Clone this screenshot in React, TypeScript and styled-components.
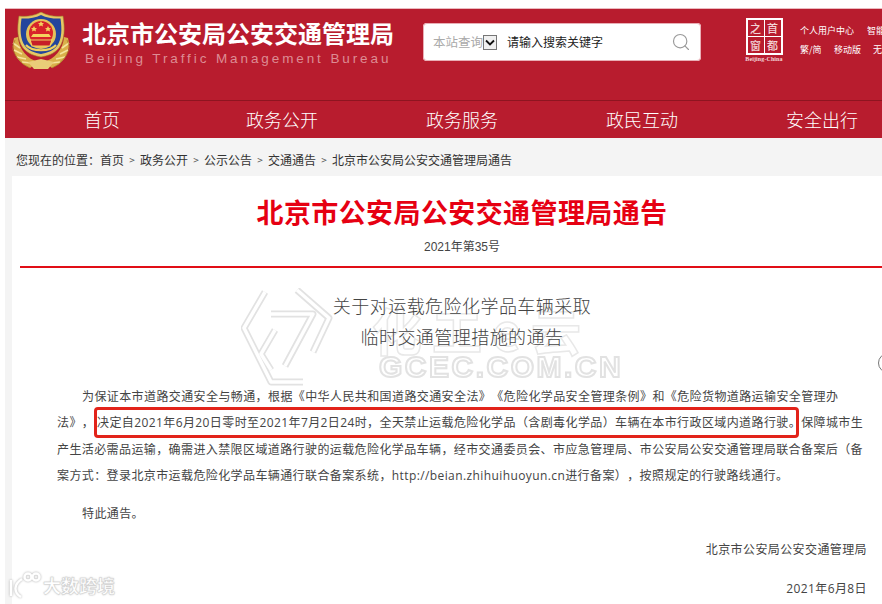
import React from "react";
import styled, { createGlobalStyle } from "styled-components";
import { Search } from "lucide-react";

const Global = createGlobalStyle`
  html, body { margin: 0; padding: 0; width: 882px; height: 604px; overflow: hidden; background: #fff; }
  body { font-family: "Liberation Sans", "Noto Sans CJK SC", sans-serif; text-spacing-trim: space-all; }
  #root { height: 604px; overflow: hidden; }
`;

const Page = styled.div`
  position: relative;
  height: 604px;
  box-sizing: border-box;
  padding: 8px 0 0 5px;
`;
const Shell = styled.div`
  position: relative;
  width: 877px;
  height: 596px;
  overflow: hidden;
  background: #f4f4f4;
`;
const RedBand = styled.header`
  background: #b81c2e;
  border-top: 1px solid #eab9bf;
`;
const TopRow = styled.div`
  display: flex;
  align-items: flex-start;
  height: 92px;
  border-bottom: 1px solid #8e1420;
  box-sizing: border-box;
  padding-left: 7px;
`;
const Emblem = styled.svg`
  width: 58px; height: 58px; margin-top: 3px; flex: none;
`;
const Brand = styled.div`
  margin-left: 12px; margin-top: 8px; width: 341px; flex: none;
`;
const BrandName = styled.div`
  font: bold 24px/32px "Noto Sans CJK SC", sans-serif;
  color: #fff;
  white-space: nowrap;
`;
const BrandSub = styled.div`
  margin: 2px 0 0 3px;
  font: 13.5px/16px "Liberation Sans", sans-serif;
  letter-spacing: 2.9px;
  color: #dd8c94;
  white-space: nowrap;
`;
const SearchBox = styled.div`
  display: flex; align-items: center;
  margin-top: 14px;
  width: 278px; height: 38px;
  box-sizing: border-box;
  padding: 0 10px;
  background: #fff;
  border-radius: 4px;
  box-shadow: 0 0 0 1px #e9aeb5 inset;
  flex: none;
`;
const ScopeLabel = styled.span`
  font: 12.5px/16px "Noto Sans CJK SC", sans-serif;
  color: #aaa;
  white-space: nowrap;
`;
const ScopeArrow = styled.span`
  display: flex; align-items: center; justify-content: center;
  width: 14px; height: 15px;
  box-sizing: border-box;
  border: 1px solid #767676;
  background: #f0f0f0;
  flex: none;
`;
const Query = styled.span`
  margin-left: 10px; flex: 1;
  font: 12px/16px "Noto Sans CJK SC", sans-serif;
  color: #222;
  white-space: nowrap;
`;
const SearchIcon = styled(Search)`
  color: #9a9a9a; flex: none;
`;
const CityLogo = styled.div`
  margin-left: 42px; margin-top: 9px; width: 42px; flex: none;
  display: flex; flex-direction: column; align-items: center;
`;
const Seal = styled.div`
  display: grid; grid-template-columns: 1fr 1fr; gap: 1px;
  width: 37px; height: 37px;
  box-sizing: border-box;
  border: 2px solid #fff;
  background: #fff;
`;
const SealCell = styled.span`
  display: flex; align-items: center; justify-content: center;
  background: #b81c2e; color: #f2d3d6;
  font: 500 11px/1 "Noto Sans CJK SC", serif;
`;
const SealCaption = styled.div`
  margin-top: 1px;
  font: bold 6px/6px "Liberation Serif", serif;
  letter-spacing: 0.1px;
  color: #f4d6d9;
  white-space: nowrap;
`;
const QuickLinks = styled.div`
  margin-left: 15px; margin-top: 12px; flex: none; width: 90px;
`;
const QuickRow = styled.div`
  display: flex; height: 19px; align-items: center;
  font: 9px/19px "Noto Sans CJK SC", sans-serif;
  color: #fff;
  white-space: nowrap;
`;
const QuickLink = styled.span<{ $w: number }>`
  width: ${(p) => p.$w}px; flex: none;
`;
const Nav = styled.nav`
  display: grid;
  grid-template-columns: repeat(5, 180px);
  height: 37px;
  padding-left: 7px;
`;
const NavItem = styled.a`
  text-align: center;
  font: 300 18px/36px "Noto Sans CJK SC", sans-serif;
  color: #fff;
`;
const Crumbs = styled.div`
  display: flex; align-items: center;
  height: 38px;
  padding: 5px 0 0 11px;
  box-sizing: border-box;
  font: 12px/16px "Noto Sans CJK SC", sans-serif;
  color: #333;
  white-space: nowrap;
`;
const CrumbSep = styled.span`
  width: 16px; text-align: center; font-size: 10px; color: #555;
`;
const Card = styled.main`
  position: relative;
  margin-left: 7px;
  width: 900px;
  height: 440px;
  box-sizing: border-box;
  padding: 16px 8px 0;
  background: #fff;
`;
const Title = styled.h1`
  margin: 0;
  text-align: center;
  font: bold 27px/40px "Noto Sans CJK SC", sans-serif;
  letter-spacing: 0.4px;
  color: #e60012;
  white-space: nowrap;
`;
const DocNo = styled.div`
  margin-top: 5px;
  text-align: center;
  font: 12px/20px "Liberation Sans", "Noto Sans CJK SC", sans-serif;
  color: #444;
`;
const Rule = styled.hr`
  margin: 9px 0 0;
  height: 2px;
  border: 0;
  background: #e10e16;
`;
const Subhead = styled.h2`
  position: relative;
  margin: 22px 0 0;
  text-align: center;
  font: 300 18px/31px "Noto Sans CJK SC", sans-serif;
  letter-spacing: 0.45px;
  color: #444;
`;
const Article = styled.article`
  position: relative;
  margin: 32px 37px 0;
  font: 12px/26.3px "Open Sans", "Noto Sans CJK SC", sans-serif;
  letter-spacing: 0.4px;
  color: #444;
`;
const Para = styled.p<{ $gap?: number }>`
  margin: ${(p) => p.$gap ?? 0}px 0 0;
  text-indent: 25px;
  white-space: nowrap;
`;
const RightLine = styled.p<{ $gap: number }>`
  margin: ${(p) => p.$gap}px 0 0;
  text-align: right;
`;
const LeadIn = styled.span`
  display: inline-block;
  text-indent: 0;
  width: 40px;
`;
const Highlight = styled.span`
  position: relative;
  &::after {
    content: "";
    position: absolute;
    left: -3px; right: 2px; top: -7px; bottom: -7px;
    border: 3px solid #e2231a;
    border-radius: 4px;
    pointer-events: none;
  }
`;
const Watermark = styled.svg`
  position: absolute; left: 229px; top: 112px;
  width: 92px; height: 100px;
  filter: blur(0.4px);
`;
const WatermarkName = styled.div`
  position: absolute; left: 360px; top: 126px;
  font: bold 50px/54px "Noto Sans CJK SC", sans-serif;
  letter-spacing: 10px;
  color: #fff;
  -webkit-text-stroke: 1.5px #e8e8e8;
  white-space: nowrap;
  filter: blur(0.5px);
`;
const WatermarkDomain = styled.div`
  position: absolute; left: 367px; top: 176px;
  font: bold 30px/30px "Liberation Sans", sans-serif;
  letter-spacing: 2.5px;
  color: #fff;
  -webkit-text-stroke: 2px #e2e2e2;
  white-space: nowrap;
  filter: blur(0.6px);
`;
const EdgeCircle = styled.span`
  position: absolute; left: 866px; top: 177px;
  width: 18px; height: 18px;
  border: 1px solid #777;
  border-radius: 50%;
`;
const Stamp = styled.div`
  position: absolute; left: 5px; top: 572px;
  display: flex; align-items: center; gap: 2px;
`;
const StampMark = styled.svg`
  width: 36px; height: 26px;
  filter: drop-shadow(0 0 1px #aaa);
`;
const StampText = styled.span`
  font: bold 18px/20px "Noto Sans CJK SC", sans-serif;
  color: #fff;
  -webkit-text-stroke: 0.5px #cfcfcf;
  text-shadow: 0 0 2px #bbb;
  white-space: nowrap;
`;

const Wheat = ({ flip }: { flip?: boolean }) => (
  <g transform={flip ? "matrix(-1 0 0 1 58 0)" : undefined}>
    <path d="M2 26 C-1 38 4 50 18 56 L26 50 C16 47 7 38 6 25 Z" fill="#d9b04a" />
    <path d="M1 31 L8 36 M2 38 L10 42 M5 45 L14 47 M10 50 L19 51" stroke="#f5e39b" strokeWidth="1.6" />
    <path d="M3 28 L0 36 L4 44 L11 52 L18 56" fill="none" stroke="#a67c2a" strokeWidth=".7" />
  </g>
);

export default function App() {
  return (
    <Page>
      <Global />
      <Shell>
        <RedBand>
          <TopRow>
            <Emblem viewBox="0 0 58 58" aria-label="警徽">
              <Wheat />
              <Wheat flip />
              <path d="M16 50 L29 47 L42 50 L36 57 L22 57 Z" fill="#e9cd78" />
              <path d="M29 0 C36 4 44 5 51 4 C53 16 53 28 47 36 C42 42 35 44 29 45 C23 44 16 42 11 36 C5 28 5 16 7 4 C14 5 22 4 29 0 Z" fill="#e6c765" stroke="#9f7d2c" strokeWidth=".6" />
              <path d="M29 3 C35 6 43 7 48.500 6.500 C50 17 50 27 45 34 C41 39 35 41 29 42 C23 41 17 39 13 34 C8 27 8 17 9.500 6.500 C15 7 23 6 29 3 Z" fill="#23459c" />
              <circle cx="29" cy="22" r="15" fill="#e5c25a" />
              <circle cx="29" cy="21" r="12" fill="#d8232a" />
              <path d="M22 14 l1 2 2 .2-1.500 1.300.5 2-2-1-2 1 .5-2-1.500-1.300 2-.2 Z M29 9 l1 2 2 .2-1.500 1.300.5 2-2-1-2 1 .5-2-1.500-1.300 2-.2 Z M36 14 l1 2 2 .2-1.500 1.300.5 2-2-1-2 1 .5-2-1.500-1.300 2-.2 Z" fill="#f4d35e" />
              <path d="M19 25 H39 L37 22 H21 Z" fill="#f4d35e" />
              <path d="M18 28 H40 L38 34 H20 Z" fill="#c71f28" stroke="#f0d160" strokeWidth="1.200" />
              <path d="M14 33 C20 40 38 40 44 33" fill="none" stroke="#f0d160" strokeWidth="2" />
            </Emblem>
            <Brand>
              <BrandName>北京市公安局公安交通管理局</BrandName>
              <BrandSub>Beijing Traffic Management Bureau</BrandSub>
            </Brand>
            <SearchBox>
              <ScopeLabel>本站查询</ScopeLabel>
              <ScopeArrow>
                <svg width="10" height="7" viewBox="0 0 10 7">
                  <path d="M1 1.500 L5 5.500 L9 1.500" fill="none" stroke="#111" strokeWidth="1.800" />
                </svg>
              </ScopeArrow>
              <Query>请输入搜索关键字</Query>
              <SearchIcon size={20} strokeWidth={1.4} />
            </SearchBox>
            <CityLogo>
              <Seal>
                <SealCell>之</SealCell>
                <SealCell>首</SealCell>
                <SealCell>窗</SealCell>
                <SealCell>都</SealCell>
              </Seal>
              <SealCaption>Beijing-China</SealCaption>
            </CityLogo>
            <QuickLinks>
              <QuickRow>
                <QuickLink $w={67}>个人用户中心</QuickLink>
                <QuickLink $w={40}>智能问答</QuickLink>
              </QuickRow>
              <QuickRow>
                <QuickLink $w={34}>繁/简</QuickLink>
                <QuickLink $w={39}>移动版</QuickLink>
                <QuickLink $w={30}>无障碍</QuickLink>
              </QuickRow>
            </QuickLinks>
          </TopRow>
          <Nav>
            <NavItem>首页</NavItem>
            <NavItem>政务公开</NavItem>
            <NavItem>政务服务</NavItem>
            <NavItem>政民互动</NavItem>
            <NavItem>安全出行</NavItem>
          </Nav>
        </RedBand>
        <Crumbs>
          您现在的位置：首页<CrumbSep>&gt;</CrumbSep>政务公开<CrumbSep>&gt;</CrumbSep>公示公告<CrumbSep>&gt;</CrumbSep>交通通告<CrumbSep>&gt;</CrumbSep>北京市公安局公安交通管理局通告
        </Crumbs>
        <Card>
          <Watermark viewBox="0 0 92 100">
            <g fill="none" stroke="#e2e2e2" strokeWidth="7" strokeLinejoin="round">
              <path d="M24 4 L3 40 L30 94 L62 94" />
              <path d="M34 42 L20 66 L30 82 M56 2 L88 30 L72 64" />
              <path d="M30 26 L72 26 L44 78" />
            </g>
            <g fill="none" stroke="#fff" strokeWidth="3.500" strokeLinejoin="round">
              <path d="M24 4 L3 40 L30 94 L62 94" />
              <path d="M34 42 L20 66 L30 82 M56 2 L88 30 L72 64" />
              <path d="M30 26 L72 26 L44 78" />
            </g>
          </Watermark>
          <WatermarkName>化工e云</WatermarkName>
          <WatermarkDomain>GCEC.COM.CN</WatermarkDomain>
          <EdgeCircle />
          <Title>北京市公安局公安交通管理局通告</Title>
          <DocNo>2021年第35号</DocNo>
          <Rule />
          <Subhead>
            关于对运载危险化学品车辆采取
            <br />
            临时交通管理措施的通告
          </Subhead>
          <Article>
            <Para>
              为保证本市道路交通安全与畅通，根据《中华人民共和国道路交通安全法》《危险化学品安全管理条例》和《危险货物道路运输安全管理办
              <br />
              <LeadIn>法》，</LeadIn>
              <Highlight>决定自2021年6月20日零时至2021年7月2日24时，全天禁止运载危险化学品（含剧毒化学品）车辆在本市行政区域内道路行驶。</Highlight>
              保障城市生
              <br />
              产生活必需品运输，确需进入禁限区域道路行驶的运载危险化学品车辆，经市交通委员会、市应急管理局、市公安局公安交通管理局联合备案后（备
              <br />
              案方式：登录北京市运载危险化学品车辆通行联合备案系统，http://beian.zhihuihuoyun.cn进行备案），按照规定的行驶路线通行。
            </Para>
            <Para $gap={12}>特此通告。</Para>
            <RightLine $gap={10}>北京市公安局公安交通管理局</RightLine>
            <RightLine $gap={12}>2021年6月8日</RightLine>
          </Article>
        </Card>
      </Shell>
      <Stamp>
        <StampMark viewBox="0 0 36 26">
          <g fill="none" stroke="#fff" strokeWidth="2.500">
            <path d="M6 8 V24 M17 7 C9 12 8 20 16 25" />
            <circle cx="23" cy="5" r="3.500" />
            <circle cx="31" cy="5" r="3.500" />
          </g>
        </StampMark>
        <StampText>大数跨境</StampText>
      </Stamp>
    </Page>
  );
}
